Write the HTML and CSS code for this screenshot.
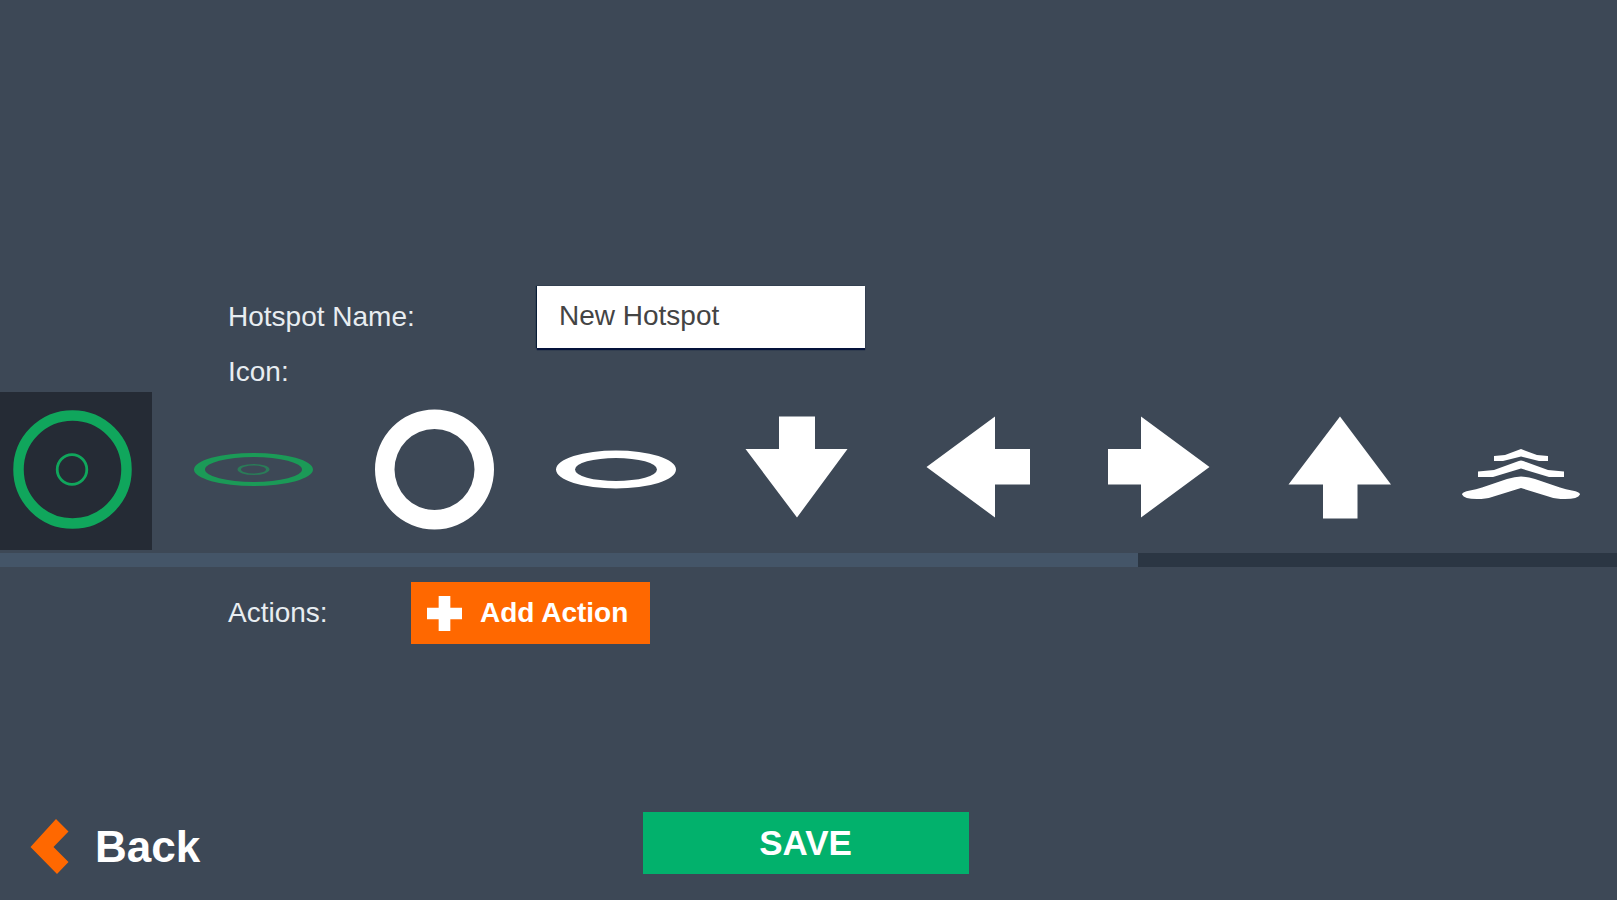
FILE: index.html
```html
<!DOCTYPE html>
<html lang="en">
<head>
<meta charset="utf-8">
<meta name="viewport" content="width=device-width, initial-scale=1">
<title>New Hotspot</title>
<link rel="stylesheet" href="styles.css">
</head>
<body>
<form class="page">
  <main class="editor">
    <div class="row">
      <label class="row-label" for="hotspot-name">Hotspot Name:</label>
      <input class="name-input" id="hotspot-name" type="text" value="New Hotspot">
    </div>
    <div class="icon-label" id="icon-label">Icon:</div>
    <div class="icons" role="radiogroup" aria-labelledby="icon-label">
      <label class="icon"><input type="radio" name="icon" aria-label="Target" checked>
        <svg class="glyph ring" viewBox="0 0 145 158"><circle cx="72.5" cy="77.5" r="54" stroke-width="10.5"/><circle cx="72" cy="77.5" r="14.8" stroke-width="2.8"/></svg></label>
      <label class="icon"><input type="radio" name="icon" aria-label="Flat target">
        <svg class="glyph flat" viewBox="0 0 145 158"><path fill-rule="evenodd" d="M13 77.5a59.5 16.5 0 0 1 119 0a59.5 16.5 0 0 1-119 0zM24 77.5a48.5 12.5 0 0 0 97 0a48.5 12.5 0 0 0-97 0z"/><path class="faint" fill-rule="evenodd" d="M56.500 77.500a16 5.500 0 0 1 32 0a16 5.500 0 0 1-32 0zM60 77.500a12.500 4 0 0 0 25 0a12.500 4 0 0 0-25 0z"/></svg></label>
      <label class="icon"><input type="radio" name="icon" aria-label="Ring">
        <svg class="glyph" viewBox="0 0 145 158"><path fill-rule="evenodd" d="M13 77.500a59.500 60 0 0 1 119 0a59.500 60 0 0 1-119 0zM32.500 77.500a40 40.500 0 0 0 80 0a40 40.500 0 0 0-80 0z"/></svg></label>
      <label class="icon"><input type="radio" name="icon" aria-label="Flat ring">
        <svg class="glyph" viewBox="0 0 145 158"><path fill-rule="evenodd" d="M13 77.500a60 19 0 0 1 120 0a60 19 0 0 1-120 0zM32 77.500a41 11.500 0 0 0 82 0a41 11.500 0 0 0-82 0z"/></svg></label>
      <label class="icon"><input type="radio" name="icon" aria-label="Arrow down">
        <svg class="glyph" viewBox="0 0 145 158"><path d="M55 24.500H91V57H123.500L73 125.500L21.500 57H55z"/></svg></label>
      <label class="icon"><input type="radio" name="icon" aria-label="Arrow left">
        <svg class="glyph" viewBox="0 0 145 158"><path d="M21.500 75L90 24.500V57H125V92.500H90V125.500z"/></svg></label>
      <label class="icon"><input type="radio" name="icon" aria-label="Arrow right">
        <svg class="glyph" viewBox="0 0 145 158"><path d="M123.500 75L55 24.500V57H22V92.500H55V125.500z"/></svg></label>
      <label class="icon"><input type="radio" name="icon" aria-label="Arrow up">
        <svg class="glyph" viewBox="0 0 145 158"><path d="M73 24.500L124 92.500H90.500V126.500H56V92.500H21.500z"/></svg></label>
      <label class="icon"><input type="radio" name="icon" aria-label="Path ahead">
        <svg class="glyph" viewBox="0 0 145 158"><path d="M73 57L89 63L100 64V69H91L73 64.500L55 69H46V64L57 63zM73 68.500Q75 68.500 78 70L100 78L116 79.500V85H101L73 76.500L45 85H30V79.500L46 78L68 70Q71 68.500 73 68.500zM73 84.500Q79 84.500 87 87L112 95.500Q118 97.500 124 98.500Q132 100 132 102.500Q130 107 117 107Q108 107 102 105L73 96L44 105Q38 107 29 107Q16 107 14 102.500Q14 100 22 98.500Q28 97.500 34 95.500L59 87Q67 84.500 73 84.500z"/></svg></label>
    </div>
    <div class="scrollbar"><div class="scroll-thumb"></div></div>
    <div class="row actions">
      <span class="row-label">Actions:</span>
      <button class="add" type="button"><svg class="plus" viewBox="0 0 36 36" aria-hidden="true"><path d="M12 0H24V12H36V24H24V36H12V24H0V12H12z"/></svg>Add Action</button>
    </div>
  </main>
  <footer class="footer">
    <button class="back" type="button"><svg class="chevron" viewBox="0 0 39 58" aria-hidden="true"><path d="M26 1L38.500 13.500L23.500 29L38.500 44L27 56L0.500 29z"/></svg>Back</button>
    <button class="save" type="submit">SAVE</button>
  </footer>
</form>
</body>
</html>
```
FILE: styles.css
```css
* { box-sizing: border-box; }

body {
  margin: 0;
  background: #3d4856;
  color: #e8edf1;
  font: 28px/32px "Liberation Sans", Arial, sans-serif;
}

button, input { font: inherit; }

button {
  border: 0;
  color: #fff;
  font-weight: bold;
  cursor: pointer;
}

.page {
  display: flex;
  flex-direction: column;
  min-height: 100vh;
}

.editor {
  flex: 1;
  padding-top: 286px;
}

.row {
  display: flex;
  padding-left: 228px;
}

.row-label {
  width: 309px;
  line-height: 62px;
}

.name-input {
  width: 328px;
  height: 62px;
  padding: 0 22px 2px;
  border: 0;
  background: #fff;
  box-shadow: 0 2px 1px #04123a, -1px 0 1px #0b2038;
  color: #444;
}

.icon-label {
  padding: 4px 0 0 228px;
  line-height: 40px;
}

.icons {
  display: flex;
  gap: 29px;
  overflow-x: auto;
  scrollbar-width: none;
}

.icon {
  position: relative;
  flex: none;
  width: 152px;
  height: 158px;
  cursor: pointer;
}

.icon:has(input:checked) { background: #252b35; }

.icon input {
  position: absolute;
  inset: 0;
  width: 100%;
  height: 100%;
  margin: 0;
  opacity: 0;
}

.glyph {
  display: block;
  width: 145px;
  height: 158px;
  fill: #fff;
}

.ring { fill: none; stroke: #10a65c; }
.flat { fill: #1b9a57; }
.faint { fill: #2a7b58; }

.scrollbar {
  height: 14px;
  margin-top: 3px;
  background: #2b3643;
}

.scroll-thumb {
  width: 70.4%;
  height: 100%;
  background: #445568;
}

.actions { padding-top: 15px; }
.actions .row-label { width: 183px; }

.add {
  display: flex;
  align-items: center;
  gap: 18px;
  height: 62px;
  padding: 0 22px 0 16px;
  background: #ff6800;
}

.plus {
  width: 35px;
  height: 35px;
  fill: #fff;
}

.footer {
  display: grid;
  grid-template-columns: 1fr auto 1fr;
  align-items: center;
  padding: 0 36px 24px 30px;
}

.back {
  display: flex;
  align-items: center;
  justify-self: start;
  gap: 26px;
  padding: 8px 0 0;
  background: none;
  font-size: 44px;
  line-height: 52px;
}

.chevron {
  width: 39px;
  height: 58px;
  fill: #ff6800;
}

.save {
  width: 326px;
  height: 62px;
  background: #02b16c;
  font-size: 35px;
}
```
